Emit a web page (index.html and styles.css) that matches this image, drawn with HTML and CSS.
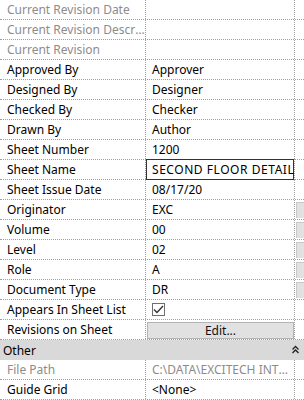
FILE: index.html
```
<!DOCTYPE html>
<html lang="en">
<head>
    <meta charset="UTF-8">
    <title>Properties</title>
    <link rel="stylesheet" href="styles.css">
</head>
<body>
    <div class="grid">
        <div class="row ro"><div class="label">Current Revision Date</div><div class="value"></div><div class="side"></div></div>
        <div class="row ro"><div class="label">Current Revision Description</div><div class="value"></div><div class="side"></div></div>
        <div class="row ro"><div class="label">Current Revision</div><div class="value"></div><div class="side"></div></div>
        <div class="row"><div class="label">Approved By</div><div class="value">Approver</div><div class="side"></div></div>
        <div class="row"><div class="label">Designed By</div><div class="value">Designer</div><div class="side"></div></div>
        <div class="row"><div class="label">Checked By</div><div class="value">Checker</div><div class="side"></div></div>
        <div class="row"><div class="label">Drawn By</div><div class="value">Author</div><div class="side"></div></div>
        <div class="row"><div class="label">Sheet Number</div><div class="value">1200</div><div class="side"></div></div>
        <div class="row"><div class="label">Sheet Name</div><div class="value editing">SECOND FLOOR DETAILS</div><div class="side"></div></div>
        <div class="row"><div class="label">Sheet Issue Date</div><div class="value">08/17/20</div><div class="side"></div></div>
        <div class="row"><div class="label">Originator</div><div class="value">EXC</div><div class="side"><span class="pick"></span></div></div>
        <div class="row"><div class="label">Volume</div><div class="value">00</div><div class="side"><span class="pick"></span></div></div>
        <div class="row"><div class="label">Level</div><div class="value">02</div><div class="side"><span class="pick"></span></div></div>
        <div class="row"><div class="label">Role</div><div class="value">A</div><div class="side"><span class="pick"></span></div></div>
        <div class="row"><div class="label">Document Type</div><div class="value">DR</div><div class="side"><span class="pick"></span></div></div>
        <div class="row"><div class="label">Appears In Sheet List</div><div class="value"><span class="check"><svg width="11" height="9" viewBox="0 0 11 9"><path d="M1 4.5 L4 7.5 L10 1" fill="none" stroke="#333" stroke-width="1.4"/></svg></span></div><div class="side"></div></div>
        <div class="row"><div class="label">Revisions on Sheet</div><div class="value"><span class="btn">Edit...</span></div><div class="side"></div></div>
        <div class="group"><span>Other</span><svg class="chev" width="9" height="9" viewBox="0 0 9 9"><path d="M1.5 4.5 L4.5 1.5 L7.5 4.5 M1.5 8 L4.5 5 L7.5 8" fill="none" stroke="#222" stroke-width="1.3"/></svg></div>
        <div class="row"><div class="label ro-text">File Path</div><div class="value ro-text">C:\DATA\EXCITECH INTERNAL\PROJECTS\SAMPLE.rvt</div><div class="side"></div></div>
        <div class="row"><div class="label">Guide Grid</div><div class="value">&lt;None&gt;</div><div class="side"></div></div>
    </div>
</body>
</html>
```

FILE: styles.css
```
body {
    margin: 0;
    background: #fff;
    font-family: "Noto Sans", "Open Sans", sans-serif;
    font-size: 12px;
    color: #000;
}
.grid {
    width: 304px;
    overflow: hidden;
}
.row {
    display: flex;
    height: 19px;
    border-bottom: 1px dotted #a0a0a0;
}
.label {
    width: 138px;
    padding-left: 7px;
    border-right: 1px dotted #a0a0a0;
    line-height: 19px;
    white-space: nowrap;
    overflow: hidden;
    text-overflow: ellipsis;
}
.value {
    width: 142px;
    padding-left: 6px;
    border-right: 1px dotted #a0a0a0;
    line-height: 19px;
    white-space: nowrap;
    overflow: hidden;
    text-overflow: ellipsis;
    position: relative;
}
.side {
    flex: 1;
    display: flex;
    padding: 2px 0 1px 1px;
}
.ro .label,
.ro-text {
    color: #8c8c8c;
}
.value.editing {
    text-overflow: clip;
    letter-spacing: 0.55px;
    box-shadow: inset 0 0 0 1px #333;
    height: 21px;
    margin-top: -1px;
    line-height: 21px;
}
.pick {
    flex: 1;
    background: #e1e1e1;
    border-top: 1px solid #c8c8c8;
    border-left: 1px solid #c8c8c8;
}
.check {
    display: inline-flex;
    align-items: center;
    justify-content: center;
    width: 11px;
    height: 11px;
    border: 1px solid #6f6f6f;
    margin-top: 3px;
    vertical-align: top;
}
.value:has(.btn) {
    padding-left: 1px;
    width: 147px;
}
.btn {
    display: block;
    margin-top: 2px;
    height: 15px;
    line-height: 15px;
    background: #e1e1e1;
    border: 1px solid #b4b4b4;
    text-align: center;
    color: #111;
}
.group {
    display: flex;
    align-items: center;
    justify-content: space-between;
    height: 20px;
    padding: 0 4px 0 3px;
    background: #d9d9d9;
}
.chev {
    margin-top: -2px;
}
```
